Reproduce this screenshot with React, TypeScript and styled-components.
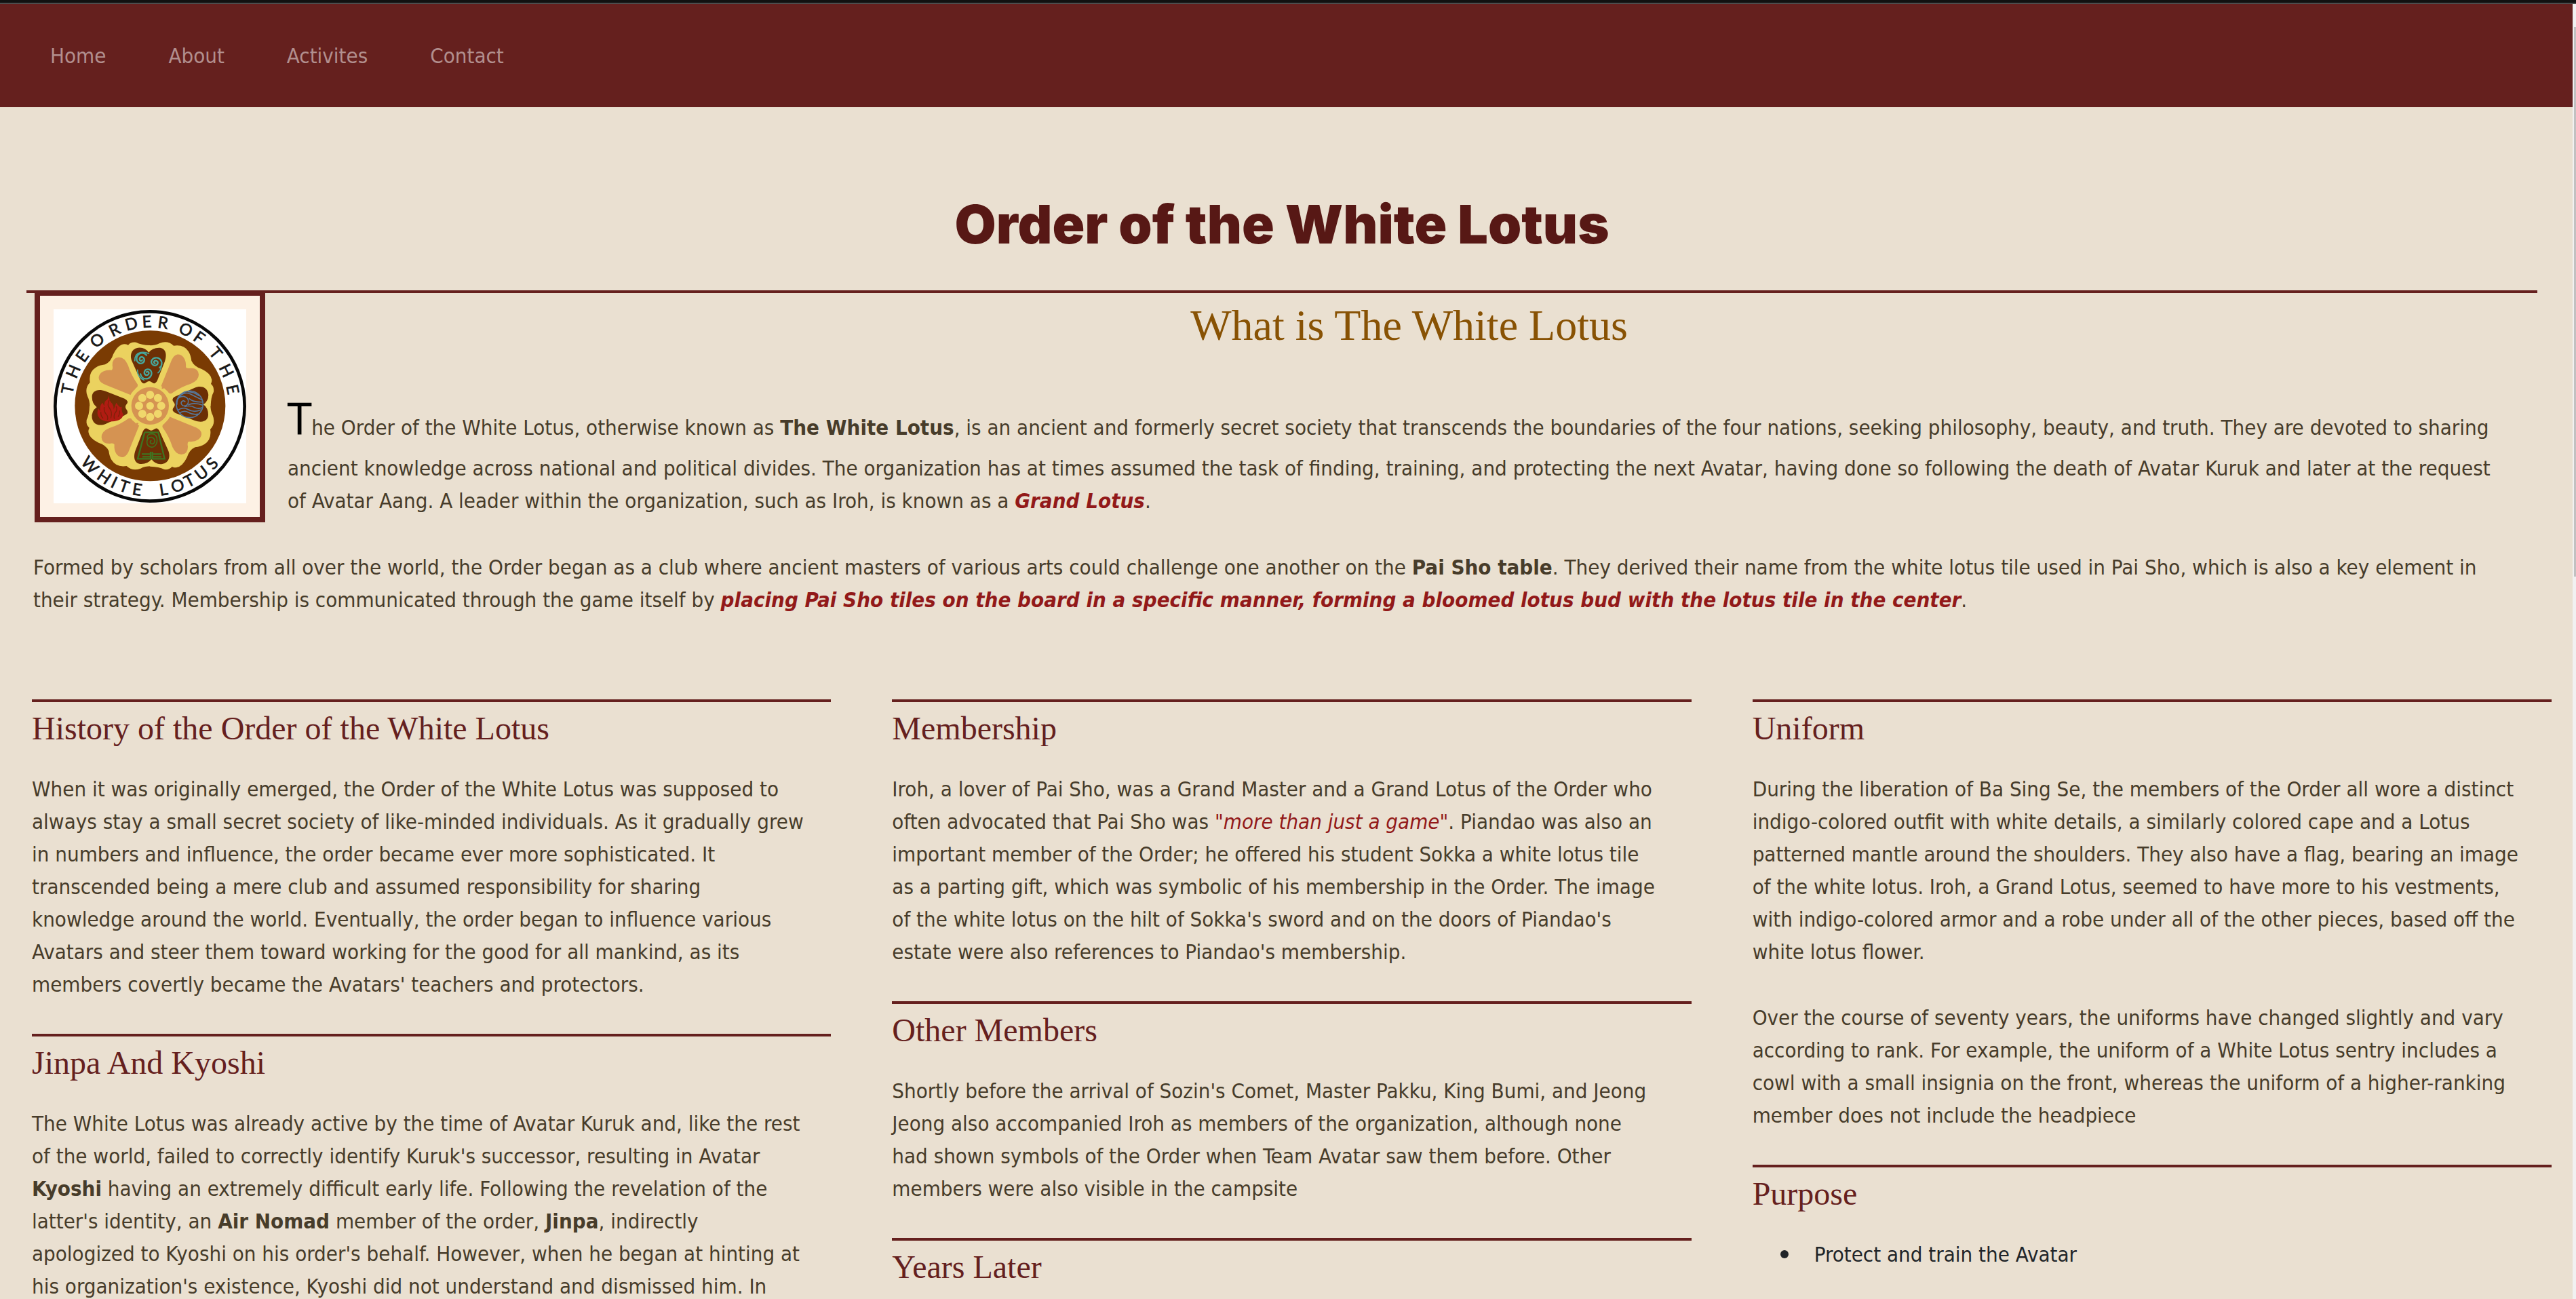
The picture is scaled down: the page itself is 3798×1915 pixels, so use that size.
import React from 'react';
import styled, { createGlobalStyle } from 'styled-components';

const maroon = '#65201e';
const sand = '#eae0d1';
const ink = '#473c2a';
const crimson = '#921919';
const sans = '"DejaVu Sans Condensed", "DejaVu Sans", Tahoma, sans-serif';
const serif = '"Liberation Serif", "Times New Roman", serif';

const GlobalStyle = createGlobalStyle`
  *, *::before, *::after { box-sizing: border-box; }
  body {
    margin: 0;
    background: ${sand};
    color: ${ink};
    font-family: ${sans};
    font-size: 31px;
    line-height: 48px;
  }
  h1, h2, h3, p, ul { margin: 0; font-weight: 400; }
`;

const Shell = styled.div`
  display: flex;
  flex-direction: column;
  height: 100vh;
  border-top: 4px solid #111111;
`;

const Viewport = styled.div`
  display: flex;
  flex: 1;
  min-height: 0;
  border-top: 2px solid #4d4d4d;
`;

const Page = styled.div`
  flex: 1;
  min-width: 0;
  overflow: hidden;
`;

const ScrollTrack = styled.div`
  flex: none;
  width: 5px;
  padding: 34px 0 0 2px;
  background: #f1f1f1;
`;

const ScrollThumb = styled.div`
  height: 810px;
  background: #c1c1c1;
`;

const NavBar = styled.nav`
  display: flex;
  align-items: center;
  gap: 92px;
  height: 152px;
  padding: 0 74px;
  background: ${maroon};
`;

const NavLink = styled.a`
  color: #b28f8e;
  text-decoration: none;
`;

const Masthead = styled.header`
  margin: 0 52px 0 39px;
  padding: 140px 0 66px;
  border-bottom: 4px solid ${maroon};
`;

const Title = styled.h1`
  && {
    font-family: Inter, sans-serif;
    font-weight: 900;
  }
  font-size: 79px;
  line-height: 64px;
  text-align: center;
  color: #571815;
`;

const Intro = styled.section`
  display: flex;
  align-items: flex-start;
  gap: 33px;
  margin: -4px 62px 0 51px;
`;

const Emblem = styled.figure`
  flex: none;
  margin: 0;
  padding: 20px;
  border: 8px solid ${maroon};
  background: #fdf1e5;

  svg {
    display: block;
    width: 284px;
    height: 286px;
    background: #ffffff;
  }
`;

const IntroBody = styled.div`
  flex: 1;
  padding-top: 13px;
`;

const IntroHeading = styled.h2`
  margin-bottom: 54px;
  font-family: ${serif};
  font-size: 64px;
  line-height: 77px;
  text-align: center;
  color: #885204;
`;

const Lead = styled.p`
  padding-right: 30px;

  &::first-letter {
    font-size: 64px;
    line-height: 94px;
    color: #000000;
  }
`;

const Summary = styled.p`
  margin: 42px 92px 123px 49px;
`;

const Columns = styled.main`
  display: grid;
  grid-template-columns: repeat(3, minmax(0, 1fr));
  align-items: start;
  gap: 90px;
  padding: 0 31px 0 47px;
`;

const Column = styled.div`
  display: grid;
  gap: 49px;
`;

const Topic = styled.article`
  border-top: 4px solid ${maroon};
  padding-top: 10px;
`;

const TopicHeading = styled.h3`
  margin-bottom: 36px;
  font-family: ${serif};
  font-size: 48px;
  line-height: 58px;
  color: ${maroon};
`;

const Text = styled.p`
  padding-right: 32px;

  & + & {
    margin-top: 49px;
  }
`;

const Goals = styled.ul`
  padding-left: 41px;
  list-style: none;
  color: #212529;
`;

const Goal = styled.li`
  display: flex;
  align-items: center;
  gap: 38px;

  &::before {
    content: '';
    width: 12px;
    height: 12px;
    border-radius: 50%;
    background: currentColor;
  }
`;

const Strong = styled.strong`
  font-weight: 700;
`;

const Quote = styled.em`
  color: ${crimson};
`;

const Highlight = styled(Quote)`
  font-weight: 700;
`;

/* ---- emblem ---- */

const CX = 424;
const CY = 445;
const QUARTERS = [0, 90, 180, 270];
const WIDTHS: Record<string, number> = {
  W: 54, H: 40, I: 16, T: 34, E: 32, L: 28, O: 44, U: 40, S: 30, R: 34, D: 42, F: 31,
};

type Glyph = [string, number];

const TOP: Glyph[] = [
  ['T', -79], ['H', -67], ['E', -54.5], ['O', -40], ['R', -26], ['D', -14], ['E', -3],
  ['R', 8], ['O', 24], ['F', 35], ['T', 50.5], ['H', 64], ['E', 78],
];
const BOTTOM: Glyph[] = [
  ['W', -47], ['H', -34], ['I', -25.5], ['T', -18.5], ['E', -9.5], ['L', 8.5], ['O', 18],
  ['T', 27], ['U', 36.5], ['S', 46.5],
];

function RingText({ glyphs, radius, below }: { glyphs: Glyph[]; radius: number; below?: boolean }) {
  const xs: number[] = [];
  const ys: number[] = [];
  const turns: number[] = [];
  glyphs.forEach(([letter, angle]) => {
    const a = (angle * Math.PI) / 180;
    const half = WIDTHS[letter] / 2;
    const side = below ? 1 : -1;
    xs.push(Math.round(CX + radius * Math.sin(a) - half * Math.cos(a)));
    ys.push(Math.round(CY + side * radius * Math.cos(a) + side * half * Math.sin(a)));
    turns.push(below ? -angle : angle);
  });
  return (
    <text
      x={xs.join(' ')}
      y={ys.join(' ')}
      rotate={turns.join(' ')}
      fontFamily="Lato, sans-serif"
      fontSize="72"
      fill="#161616"
      stroke="#161616"
      strokeWidth="2"
    >
      {glyphs.map(([letter]) => letter).join('')}
    </text>
  );
}

function Swirl({ x, y, turn }: { x: number; y: number; turn: number }) {
  return (
    <path
      transform={`translate(${x} ${y}) rotate(${turn})`}
      d="M2 4C-6 8-11-2-3-8C6-14 16-4 11 7C5 19-13 18-18 5C-23-12-8-27 9-25C22-23 30-12 30 0"
    />
  );
}

function LotusSeal() {
  return (
    <svg viewBox="-3 18 852 858" preserveAspectRatio="none" role="img" aria-label="Seal of the Order of the White Lotus">
      <circle cx="423" cy="447" r="419" fill="#fff" stroke="#080808" strokeWidth="14" />
      <circle cx={CX} cy={CY} r="333" fill="#7a3b03" />
      {QUARTERS.map((q) => (
        <path
          key={q}
          transform={`rotate(${q} ${CX} ${CY})`}
          fill="#ebd25f"
          d="M420 450L420 178Q448 178 466 168Q502 154 528 179Q574 172 594 205Q604 221 607 246Q619 272 652 282Q694 302 697 330Q697 340 693 348Q708 360 705 383Q693 405 692 445L424 450Z"
        />
      ))}
      {QUARTERS.map((q) => (
        <g key={q} transform={`rotate(${q} ${CX} ${CY})`}>
          <path
            fill="#d59352"
            d="M369 350Q340 310 326 265Q311 229 285 230Q256 232 257 266Q261 283 253 287C216 283 191 306 198 328Q203 344 232 354L338 397Q346 400 350 386Q357 367 366 363Q371 359 369 350Z"
          />
          <path
            fill="#6c2f05"
            d="M418 209Q400 184 370 188C338 194 334 224 344 248L382 332Q392 354 407 341Q419 331 430 340Q445 354 456 332L489 248C502 210 488 188 463 188Q434 188 418 209Z"
          />
        </g>
      ))}
      <circle cx={CX} cy={CY} r="94" fill="none" stroke="#ebd25f" strokeWidth="12" strokeDasharray="34 8" />
      <circle cx={CX} cy={CY} r="83" fill="#d59352" />
      <g fill="#f0d76b">
        <circle cx={CX} cy={CY} r="17" />
        {[0, 45, 90, 135, 180, 225, 270, 315].map((a) => (
          <circle key={a} cx={CX} cy={CY - 49} r="18" transform={`rotate(${a} ${CX} ${CY})`} />
        ))}
      </g>
      <g fill="none" stroke="#46a79d" strokeWidth="7" strokeLinecap="round">
        <Swirl x={385} y={240} turn={-40} />
        <Swirl x={447} y={253} turn={50} />
        <Swirl x={411} y={299} turn={170} />
        <path d="M356 246Q356 214 382 209Q402 206 418 214M474 258Q475 285 459 299M368 286Q368 320 397 331" strokeWidth="5" />
      </g>
      <path
        fill="#b01c12"
        d="M243 399Q240 420 257 436Q264 446 263 461L274 431Q293 458 299 448Q296 470 306 484Q300 512 256 514Q206 518 193 488Q188 474 195 456L203 468Q200 440 214 431L221 446Q220 424 234 418Z"
      />
      <path
        fill="none"
        stroke="#7d2109"
        strokeWidth="4"
        d="M243 420Q232 442 245 456Q258 474 250 500M221 450Q218 470 230 482Q240 492 235 506M274 447Q281 464 269 476Q262 488 266 503M206 472Q205 490 216 500M289 466Q291 482 282 493"
      />
      <g fill="none" stroke="#56779b" strokeWidth="5">
        <circle cx="599" cy="438" r="59" />
        <path d="M544 417Q569 377 603 393Q625 404 656 420M543 440Q540 402 573 403Q598 409 592 432Q585 449 569 444Q556 435 565 425Q573 419 580 428M596 412Q613 430 657 428M592 440Q620 428 657 442M546 464Q569 449 589 460Q618 477 650 462M553 477Q575 463 593 474Q614 486 637 481M576 448Q605 441 622 453Q638 460 655 452M590 382Q617 382 641 401" />
      </g>
      <g fill="none" stroke="#3f7420" strokeWidth="7">
        <path d="M400 562H460L488 679H434V648M400 562L369 679H426V648M387 658H424M436 658H474M390 670H424M436 670H474" />
        <path d="M411 589Q409 569 432 568Q456 570 455 600Q451 627 431 628Q408 625 410 601Q414 582 432 584Q446 589 444 604Q438 618 427 611Q420 602 430 598" strokeWidth="5" />
      </g>
      <RingText glyphs={TOP} radius={347} />
      <RingText glyphs={BOTTOM} radius={399} below />
    </svg>
  );
}

export default function App() {
  return (
    <>
      <GlobalStyle />
      <Shell>
        <Viewport>
          <Page>
            <NavBar aria-label="Main">
              <NavLink href="#home">Home</NavLink>
              <NavLink href="#about">About</NavLink>
              <NavLink href="#activites">Activites</NavLink>
              <NavLink href="#contact">Contact</NavLink>
            </NavBar>

            <Masthead>
              <Title>Order of the White Lotus</Title>
            </Masthead>

            <Intro>
              <Emblem>
                <LotusSeal />
              </Emblem>
              <IntroBody>
                <IntroHeading>What is The White Lotus</IntroHeading>
                <Lead>
                  The Order of the White Lotus, otherwise known as <Strong>The White Lotus</Strong>, is an ancient and
                  formerly secret society that transcends the boundaries of the four nations, seeking philosophy, beauty,
                  and truth. They are devoted to sharing ancient knowledge across national and political divides. The
                  organization has at times assumed the task of finding, training, and protecting the next Avatar, having
                  done so following the death of Avatar Kuruk and later at the request of Avatar Aang. A leader within the
                  organization, such as Iroh, is known as a <Highlight>Grand Lotus</Highlight>.
                </Lead>
              </IntroBody>
            </Intro>
            <Summary>
              Formed by scholars from all over the world, the Order began as a club where ancient masters of various arts
              could challenge one another on the <Strong>Pai Sho table</Strong>. They derived their name from the white
              lotus tile used in Pai Sho, which is also a key element in their strategy. Membership is communicated through
              the game itself by{' '}
              <Highlight>
                placing Pai Sho tiles on the board in a specific manner, forming a bloomed lotus bud with the lotus tile in
                the center
              </Highlight>
              .
            </Summary>

            <Columns>
              <Column>
                <Topic>
                  <TopicHeading>History of the Order of the White Lotus</TopicHeading>
                  <Text>
                    When it was originally emerged, the Order of the White Lotus was supposed to always stay a small secret
                    society of like-minded individuals. As it gradually grew in numbers and influence, the order became
                    ever more sophisticated. It transcended being a mere club and assumed responsibility for sharing
                    knowledge&nbsp;around the world. Eventually, the order began to influence various Avatars and steer
                    them toward working for the good for all mankind, as its members covertly became the Avatars' teachers
                    and protectors.
                  </Text>
                </Topic>
                <Topic>
                  <TopicHeading>Jinpa And Kyoshi</TopicHeading>
                  <Text>
                    The White Lotus was already active by the time of Avatar Kuruk and, like the rest of the world, failed
                    to correctly identify Kuruk's successor, resulting in Avatar <Strong>Kyoshi</Strong> having an
                    extremely difficult early life. Following the revelation of the latter's identity, an{' '}
                    <Strong>Air Nomad</Strong> member of the order, <Strong>Jinpa</Strong>, indirectly apologized&nbsp;to
                    Kyoshi on his order's behalf. However, when he began at hinting at his organization's existence, Kyoshi
                    did not understand and dismissed him. In
                  </Text>
                </Topic>
              </Column>

              <Column>
                <Topic>
                  <TopicHeading>Membership</TopicHeading>
                  <Text>
                    Iroh, a lover of Pai Sho, was a Grand Master and a Grand Lotus of the Order who often advocated that
                    Pai Sho was <Quote>"more than just a game"</Quote>. Piandao was also an important member of the Order;
                    he offered his student Sokka a white lotus tile as&nbsp;a parting gift, which was symbolic of his
                    membership in the Order. The image of the white lotus on the hilt of Sokka's sword and on the doors of
                    Piandao's estate were also references to Piandao's membership.
                  </Text>
                </Topic>
                <Topic>
                  <TopicHeading>Other Members</TopicHeading>
                  <Text>
                    Shortly before the arrival of Sozin's Comet, Master Pakku, King Bumi, and Jeong Jeong also accompanied
                    Iroh as members of the organization, although none had&nbsp;shown symbols of the Order when Team Avatar
                    saw them before. Other members were also visible in the campsite
                  </Text>
                </Topic>
                <Topic>
                  <TopicHeading>Years Later</TopicHeading>
                </Topic>
              </Column>

              <Column>
                <Topic>
                  <TopicHeading>Uniform</TopicHeading>
                  <Text>
                    During the liberation of Ba Sing Se, the members of the Order all wore a distinct indigo-colored outfit
                    with white details, a similarly colored cape and a Lotus patterned mantle around the shoulders. They
                    also have a flag, bearing an image of the white lotus. Iroh, a Grand Lotus, seemed to have more to his
                    vestments, with indigo-colored armor and a robe under all of the other pieces, based off the white
                    lotus flower.
                  </Text>
                  <Text>
                    Over the course of seventy years, the uniforms have changed slightly and vary according to rank. For
                    example, the uniform of a White Lotus sentry includes a cowl with a small insignia on the front,
                    whereas the uniform of a higher-ranking member does not include the headpiece
                  </Text>
                </Topic>
                <Topic>
                  <TopicHeading>Purpose</TopicHeading>
                  <Goals>
                    <Goal>Protect and train the Avatar</Goal>
                  </Goals>
                </Topic>
              </Column>
            </Columns>
          </Page>
          <ScrollTrack>
            <ScrollThumb />
          </ScrollTrack>
        </Viewport>
      </Shell>
    </>
  );
}
